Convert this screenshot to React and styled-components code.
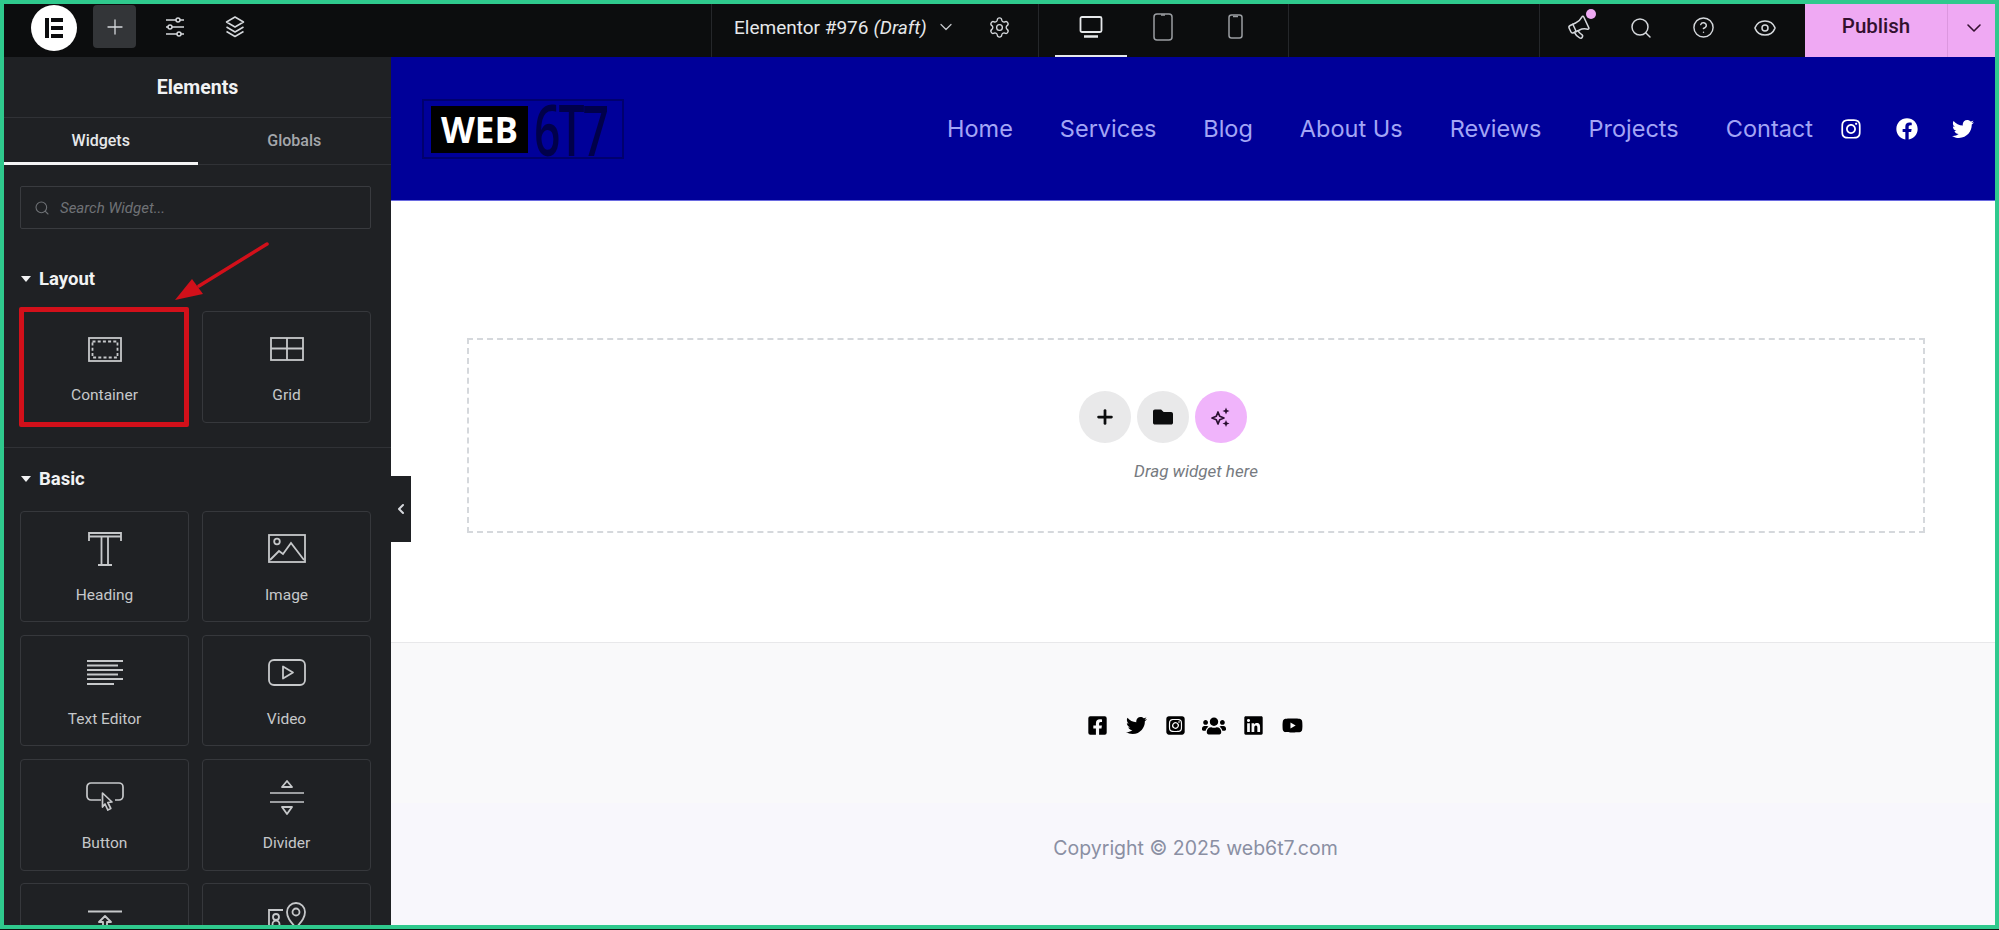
import styled, { createGlobalStyle } from "styled-components";
import { Plus, ChevronDown, ChevronLeft, Settings, Megaphone, Search, CircleHelp, Eye } from "lucide-react";
import { FaFacebook, FaFacebookSquare, FaFolder, FaInstagram, FaLinkedin, FaTwitter, FaUsers, FaYoutube } from "react-icons/fa";
import { FaSquareInstagram } from "react-icons/fa6";

/* ── global ───────────────────────────────────────────── */
const GlobalStyle = createGlobalStyle`
  html, body { margin: 0; padding: 0; background: #0d1512; }
  * { box-sizing: border-box; }
  body { font-family: Roboto, "Liberation Sans", sans-serif; }
`;

const Frame = styled.div`
  width: 1999px;
  height: 929px;
  border: 4px solid #2fc98d;
  display: flex;
  flex-direction: column;
  overflow: hidden;
  background: #fff;
`;

/* ── top bar ──────────────────────────────────────────── */
const TopBar = styled.header`
  height: 53px;
  flex: none;
  display: flex;
  background: #0c0d0e;
  color: #d5d8dc;
`;

const LeftTools = styled.div`
  width: 707px;
  display: flex;
  align-items: flex-start;
  gap: 17px;
  padding: 1px 0 0 27px;
`;

const LogoDisc = styled.div`
  width: 46px;
  height: 46px;
  margin-right: -1px;
  border-radius: 50%;
  background: #fff;
  display: flex;
  align-items: center;
  justify-content: center;
`;

const ToolBtn = styled.div`
  width: 43px;
  height: 43px;
  border-radius: 4px;
  display: flex;
  align-items: center;
  justify-content: center;
  background: ${(p) => (p.$active ? "#333538" : "transparent")};
`;

const TitleArea = styled.div`
  width: 327px;
  display: flex;
  align-items: center;
  padding: 0 0 7px 22px;
  border-left: 1px solid #25272a;
  font-size: 19px;
  color: #e6e8ea;
  white-space: nowrap;

  em { margin-left: 5px; }
`;

const TitleChevron = styled.span`
  display: flex;
  margin-left: 9px;
  color: #c5c7ca;
`;

const TitleGear = styled.span`
  display: flex;
  margin-left: 32px;
  color: #d5d8dc;
`;

const Devices = styled.div`
  width: 251px;
  display: flex;
  padding: 0 16px;
  border-left: 1px solid #25272a;
  border-right: 1px solid #25272a;
`;

const DeviceTab = styled.div`
  width: 73px;
  display: flex;
  align-items: center;
  justify-content: center;
  padding-bottom: 6px;
  color: ${(p) => (p.$active ? "#e6e8ea" : "#9a9da1")};
  border-bottom: 2px solid ${(p) => (p.$active ? "#e6e8ea" : "transparent")};
`;

const RightTools = styled.div`
  width: 456px;
  margin-left: auto;
  display: flex;
  justify-content: space-between;
  padding-left: 8px;
  border-left: 1px solid #25272a;
`;

const IconRow = styled.div`
  display: flex;
`;

const RightBtn = styled.div`
  position: relative;
  width: 62px;
  display: flex;
  align-items: center;
  justify-content: center;
  padding-bottom: 6px;
`;

const NoticeDot = styled.span`
  position: absolute;
  top: 5px;
  left: 38px;
  width: 10px;
  height: 10px;
  border-radius: 50%;
  background: #efa9f3;
`;

const Publish = styled.div`
  width: 190px;
  flex: none;
  display: flex;
  background: #efa9f3;
  color: #33102f;
`;

const PublishLabel = styled.div`
  width: 142px;
  display: flex;
  align-items: center;
  justify-content: center;
  padding-bottom: 9px;
  font-size: 20.5px;
  font-weight: 500;
`;

const PublishMore = styled.div`
  flex: 1;
  display: flex;
  align-items: center;
  justify-content: center;
  padding: 0 0 5px 5px;
  border-left: 1px solid #dc97df;
`;

/* ── side panel ───────────────────────────────────────── */
const Body = styled.div`
  flex: 1;
  min-height: 0;
  display: flex;
`;

const Panel = styled.aside`
  position: relative;
  width: 387px;
  flex: none;
  background: #1f2124;
  color: #d5d8dc;
  overflow: hidden;
`;

const PanelTitle = styled.div`
  height: 61px;
  display: flex;
  align-items: center;
  justify-content: center;
  border-bottom: 1px solid #303236;
  font-size: 19.5px;
  font-weight: 700;
  color: #f1f2f3;
`;

const Tabs = styled.div`
  height: 47px;
  display: flex;
  border-bottom: 1px solid #303236;
`;

const Tab = styled.div`
  width: 194px;
  display: flex;
  align-items: center;
  justify-content: center;
  padding-top: 1px;
  margin-bottom: -1px;
  font-size: 16px;
  font-weight: 500;
  color: ${(p) => (p.$active ? "#e6e8ea" : "#a4a7ab")};
  border-bottom: 3px solid ${(p) => (p.$active ? "#f4f4f5" : "transparent")};
`;

const SearchBox = styled.div`
  height: 43px;
  margin: 21px 20px 0 16px;
  display: flex;
  align-items: center;
  gap: 10px;
  padding-left: 13px;
  border: 1px solid #393b3f;
  border-radius: 2px;
  font-size: 15px;
  font-style: italic;
  color: #6f7276;
`;

const Section = styled.section`
  padding: ${(p) => (p.$first ? "39px" : "20px")} 20px 24px 16px;
  border-bottom: ${(p) => (p.$first ? "1px solid #303236" : "none")};
`;

const SectionTitle = styled.h3`
  height: 22px;
  margin: 0 0 21px;
  display: flex;
  align-items: center;
  gap: 8px;
  font-size: 18.5px;
  font-weight: 700;
  color: #f1f2f3;

  &::before {
    content: "";
    margin-left: 1px;
    border-left: 5px solid transparent;
    border-right: 5px solid transparent;
    border-top: 6px solid #f1f2f3;
  }
`;

const CardGrid = styled.div`
  display: grid;
  grid-template-columns: 169px 169px;
  grid-auto-rows: 111.5px;
  gap: 12.8px 13px;
`;

const Card = styled.div`
  position: relative;
  display: flex;
  flex-direction: column;
  align-items: center;
  padding-top: 17px;
  border: 1px solid #36383c;
  border-radius: 4px;
  font-size: 15.5px;
  color: #c6c8ca;

  ${(p) =>
    p.$marked &&
    `&::after {
      content: "";
      position: absolute;
      inset: -5px -1px -5px -2px;
      border: 5px solid #d2101a;
      border-radius: 2px;
    }`}
`;

const CardIcon = styled.div`
  height: 40px;
  display: flex;
  align-items: ${(p) => (p.$low ? "flex-end" : "center")};
  justify-content: center;
  color: #c6c8ca;
`;

const CardLabel = styled.div`
  height: 20px;
  margin-top: 16px;
  line-height: 20px;
`;

const RedArrow = styled.svg`
  position: absolute;
  left: 167px;
  top: 181px;
`;

/* ── canvas ───────────────────────────────────────────── */
const Canvas = styled.main`
  position: relative;
  flex: 1;
  display: flex;
  flex-direction: column;
`;

const CollapseTab = styled.div`
  position: absolute;
  left: 0;
  top: 419px;
  width: 20px;
  height: 66px;
  display: flex;
  align-items: center;
  justify-content: center;
  background: #1f2124;
  color: #d5d8dc;
`;

const SiteHeader = styled.div`
  height: 144px;
  flex: none;
  display: flex;
  align-items: center;
  padding: 1px 21px 0 31px;
  background: #000099;
  border-bottom: 1px solid #6a6ae0;
`;

const Logo = styled.div`
  width: 202px;
  height: 60px;
  flex: none;
  display: flex;
  align-items: center;
  padding-left: 7px;
  border: 2px solid #00006e;
`;

const LogoWeb = styled.div`
  width: 97px;
  height: 47px;
  flex: none;
  display: flex;
  align-items: center;
  justify-content: center;
  background: #000;
  color: #fff;
  font: 700 35px/1 "Open Sans", sans-serif;
`;

const LogoNum = styled.div`
  margin-left: 6px;
  font: 600 70px/56px "Open Sans", sans-serif;
  color: #00004a;
  letter-spacing: -3px;
  transform: scaleX(0.66);
  transform-origin: left center;
`;

const Nav = styled.nav`
  margin-left: auto;
  display: flex;
  gap: 47px;
  font: 400 23.5px/1 Inter, sans-serif;
  color: #a3a5f5;
  white-space: nowrap;
`;

const Socials = styled.div`
  margin-left: 27px;
  display: flex;
  align-items: center;
  gap: 34px;
  color: #fff;
`;

const Stage = styled.div`
  height: 441px;
  flex: none;
  padding: 137px 70px 0 76px;
  background: #fff;
`;

const DropZone = styled.div`
  height: 195px;
  display: flex;
  flex-direction: column;
  align-items: center;
  padding-top: 51px;
  border: 2px dashed #d5d8dc;
`;

const CircleRow = styled.div`
  display: flex;
  gap: 6px;
  margin-right: 66px;
`;

const Circle = styled.div`
  width: 52px;
  height: 52px;
  border-radius: 50%;
  display: flex;
  align-items: center;
  justify-content: center;
  color: #0c0d0e;
  background: ${(p) => (p.$ai ? "#f0b4fb" : "#e9e9ea")};
`;

const DropHint = styled.div`
  height: 20px;
  margin-top: 18px;
  font-size: 17px;
  font-style: italic;
  line-height: 20px;
  color: #767a80;
`;

const FooterIcons = styled.div`
  height: 161px;
  flex: none;
  display: flex;
  align-items: center;
  justify-content: center;
  gap: 18px;
  padding: 5px 0 0 3px;
  background: #f9f9fa;
  border-top: 1px solid #e8e8ea;
  color: #000;
`;

const UsersIcon = styled(FaUsers)`
  margin: 0 -1.5px;
`;

const Copyright = styled.div`
  flex: 1;
  padding: 33px 0 0 5px;
  background: #f8f7fc;
  text-align: center;
  font: 400 19.5px/24px Inter, sans-serif;
  color: #8a8fa3;
`;

/* ── drawings ─────────────────────────────────────────── */
const ElementorMark = () => (
  <svg width="22" height="22" viewBox="0 0 22 22" fill="#0c0d0e">
    <rect x="2" y="1" width="4" height="20" />
    <rect x="8" y="1" width="12" height="4" />
    <rect x="8" y="9" width="12" height="4" />
    <rect x="8" y="17" width="12" height="4" />
  </svg>
);

const SlidersIcon = () => (
  <svg width="22" height="22" viewBox="0 0 22 22" fill="none" stroke="#d5d8dc" strokeWidth="1.5">
    <path d="M2 4h10M16 4h4M2 11h2M8 11h12M2 18h11M17 18h3" />
    <circle cx="14" cy="4" r="2" />
    <circle cx="6" cy="11" r="2" />
    <circle cx="15" cy="18" r="2" />
  </svg>
);

const LayersIcon = () => (
  <svg width="22" height="24" viewBox="0 0 22 24" fill="none" stroke="#d5d8dc" strokeWidth="1.5" strokeLinejoin="round">
    <path d="M11 2l8.500 5-8.500 5-8.500-5z" />
    <path d="M2.500 12l8.500 5 8.500-5" />
    <path d="M2.500 16.500l8.500 5 8.500-5" />
  </svg>
);

const DesktopIcon = () => (
  <svg width="24" height="22" viewBox="0 0 24 22" fill="none" stroke="currentColor" strokeWidth="1.8">
    <rect x="1.500" y="1" width="21" height="15" rx="1.500" />
    <path d="M5 20.500h14" strokeWidth="2.500" />
  </svg>
);

const TabletIcon = () => (
  <svg width="20" height="28" viewBox="0 0 20 28" fill="none" stroke="currentColor" strokeWidth="1.500">
    <rect x="1" y="1" width="18" height="26" rx="3" />
    <path d="M8 2h4" />
  </svg>
);

const PhoneIcon = () => (
  <svg width="15" height="25" viewBox="0 0 15 25" fill="none" stroke="currentColor" strokeWidth="1.500">
    <rect x="1" y="1" width="13" height="23" rx="2.500" />
    <path d="M5 2.500h5" />
  </svg>
);

const AiIcon = () => (
  <svg width="22" height="22" viewBox="0 0 22 22" fill="#2a1030">
    <path d="M8 6l1.700 4.300L14 12l-4.300 1.700L8 18l-1.700-4.300L2 12l4.300-1.700z" fill="none" stroke="#2a1030" strokeWidth="1.700" strokeLinejoin="round" />
    <path d="M16 1.500l1 2.500 2.500 1-2.500 1-1 2.500-1-2.500-2.500-1 2.500-1z" />
    <path d="M16 14l1 2.500 2.500 1-2.500 1-1 2.500-1-2.500-2.500-1 2.500-1z" />
  </svg>
);

const stroke = { fill: "none", stroke: "currentColor", strokeWidth: 1.5 };

const ContainerGlyph = () => (
  <svg width="34" height="25" viewBox="0 0 34 25" {...stroke} strokeWidth="1.800">
    <rect x="1" y="1" width="32" height="23" />
    <rect x="4.500" y="4.500" width="25" height="16" strokeDasharray="3 2.200" />
  </svg>
);

const GridGlyph = () => (
  <svg width="34" height="24" viewBox="0 0 34 24" {...stroke} strokeWidth="1.800">
    <rect x="1" y="1" width="32" height="22" />
    <path d="M1 11.500h32M17 1v22" />
  </svg>
);

const HeadingGlyph = () => (
  <svg width="36" height="36" viewBox="0 0 36 36" {...stroke} strokeWidth="1.800">
    <path d="M2 10V2h32v8M2 5.500h32M14.500 5.500V33M21 5.500V33M11 34h14" />
  </svg>
);

const ImageGlyph = () => (
  <svg width="38" height="29" viewBox="0 0 38 29" {...stroke} strokeWidth="1.800">
    <rect x="1" y="1" width="36" height="27" />
    <circle cx="9" cy="7.500" r="2.800" />
    <path d="M2 26l9-9 4 3 8-11 13 17" />
  </svg>
);

const TextGlyph = () => (
  <svg width="38" height="26" viewBox="0 0 38 26" {...stroke} strokeWidth="2">
    <path d="M1 1h36M1 5.500h31M1 10h36M1 14.500h31M1 19h36M1 24h27" />
  </svg>
);

const VideoGlyph = () => (
  <svg width="38" height="27" viewBox="0 0 38 27" {...stroke} strokeWidth="1.800">
    <rect x="1" y="1" width="36" height="25" rx="5" />
    <path d="M15 7.500v12l10-6z" strokeLinejoin="round" />
  </svg>
);

const ButtonGlyph = () => (
  <svg width="38" height="30" viewBox="0 0 38 30" {...stroke} strokeWidth="1.700">
    <path d="M15 18H5a4 4 0 0 1-4-4V5a4 4 0 0 1 4-4h28a4 4 0 0 1 4 4v9a4 4 0 0 1-4 4h-4" />
    <path d="M16.500 11l9.500 9-4.200.5 3 6-3 1.500-2.800-6-2.500 3z" strokeLinejoin="round" />
  </svg>
);

const DividerGlyph = () => (
  <svg width="36" height="36" viewBox="0 0 36 36" {...stroke} strokeWidth="1.700">
    <path d="M1 14h34M1 23h34" />
    <path d="M18 2l5 6H13zM18 35l-5-7h10z" strokeLinejoin="round" strokeWidth="1.800" />
  </svg>
);

const SpacerGlyph = () => (
  <svg width="36" height="31" viewBox="0 0 36 31" {...stroke} strokeWidth="1.800">
    <path d="M1 1.500h34M18 6l-6 6h4v18h4V12h4z" strokeLinejoin="round" />
  </svg>
);

const MapGlyph = () => (
  <svg width="38" height="38" viewBox="0 0 38 38" {...stroke} strokeWidth="1.800">
    <path d="M15 8H1v28h14" />
    <circle cx="8" cy="15" r="3" />
    <circle cx="8" cy="22" r="3.500" />
    <circle cx="28" cy="10" r="3.500" />
    <path d="M28 26c-5-6-9-10-9-16a9 9 0 0 1 18 0c0 6-4 10-9 16z" />
    <path d="M18 36l5-9M38 36l-5-9" />
  </svg>
);

const layoutCards = [
  { label: "Container", Glyph: ContainerGlyph, marked: true },
  { label: "Grid", Glyph: GridGlyph },
];

// the last row runs past the bottom of the panel, only its icons show
const basicCards = [
  { label: "Heading", Glyph: HeadingGlyph },
  { label: "Image", Glyph: ImageGlyph },
  { label: "Text Editor", Glyph: TextGlyph },
  { label: "Video", Glyph: VideoGlyph },
  { label: "Button", Glyph: ButtonGlyph },
  { label: "Divider", Glyph: DividerGlyph },
  { id: "spacer", Glyph: SpacerGlyph, low: true },
  { id: "maps", Glyph: MapGlyph },
];

const navItems = ["Home", "Services", "Blog", "About Us", "Reviews", "Projects", "Contact"];

const renderCards = (cards) =>
  cards.map(({ id, label, Glyph, marked, low }) => (
    <Card key={id || label} $marked={marked}>
      <CardIcon $low={low}>
        <Glyph />
      </CardIcon>
      {label && <CardLabel>{label}</CardLabel>}
    </Card>
  ));

export default function App() {
  return (
    <>
      <GlobalStyle />
      <Frame>
        <TopBar>
          <LeftTools>
            <LogoDisc>
              <ElementorMark />
            </LogoDisc>
            <ToolBtn $active>
              <Plus size={24} strokeWidth={1.3} />
            </ToolBtn>
            <ToolBtn>
              <SlidersIcon />
            </ToolBtn>
            <ToolBtn>
              <LayersIcon />
            </ToolBtn>
          </LeftTools>
          <TitleArea>
            Elementor #976 <em>(Draft)</em>
            <TitleChevron>
              <ChevronDown size={20} strokeWidth={1.5} />
            </TitleChevron>
            <TitleGear>
              <Settings size={23} strokeWidth={1.4} />
            </TitleGear>
          </TitleArea>
          <Devices>
            <DeviceTab $active>
              <DesktopIcon />
            </DeviceTab>
            <DeviceTab>
              <TabletIcon />
            </DeviceTab>
            <DeviceTab>
              <PhoneIcon />
            </DeviceTab>
          </Devices>
          <RightTools>
            <IconRow>
              <RightBtn>
                <Megaphone size={24} strokeWidth={1.5} style={{ transform: "rotate(-25deg)" }} />
                <NoticeDot />
              </RightBtn>
              <RightBtn>
                <Search size={24} strokeWidth={1.5} />
              </RightBtn>
              <RightBtn>
                <CircleHelp size={23} strokeWidth={1.5} />
              </RightBtn>
              <RightBtn>
                <Eye size={24} strokeWidth={1.5} />
              </RightBtn>
            </IconRow>
            <Publish>
              <PublishLabel>Publish</PublishLabel>
              <PublishMore>
                <ChevronDown size={24} strokeWidth={1.6} />
              </PublishMore>
            </Publish>
          </RightTools>
        </TopBar>

        <Body>
          <Panel>
            <PanelTitle>Elements</PanelTitle>
            <Tabs>
              <Tab $active>Widgets</Tab>
              <Tab>Globals</Tab>
            </Tabs>
            <SearchBox>
              <Search size={16} strokeWidth={1.6} />
              Search Widget...
            </SearchBox>
            <Section $first>
              <SectionTitle>Layout</SectionTitle>
              <CardGrid>{renderCards(layoutCards)}</CardGrid>
            </Section>
            <Section>
              <SectionTitle>Basic</SectionTitle>
              <CardGrid>{renderCards(basicCards)}</CardGrid>
            </Section>
            <RedArrow width="100" height="70" viewBox="0 0 100 70">
              <path d="M96 6L28 48" stroke="#d2101a" strokeWidth="3.500" strokeLinecap="round" />
              <path d="M4 62l17-21 11 15z" fill="#d2101a" />
            </RedArrow>
          </Panel>

          <Canvas>
            <CollapseTab>
              <ChevronLeft size={16} strokeWidth={3} />
            </CollapseTab>
            <SiteHeader>
              <Logo>
                <LogoWeb>WEB</LogoWeb>
                <LogoNum>6T7</LogoNum>
              </Logo>
              <Nav>
                {navItems.map((item) => (
                  <span key={item}>{item}</span>
                ))}
              </Nav>
              <Socials>
                <FaInstagram size={22} />
                <FaFacebook size={22} />
                <FaTwitter size={22} />
              </Socials>
            </SiteHeader>
            <Stage>
              <DropZone>
                <CircleRow>
                  <Circle>
                    <Plus size={22} strokeWidth={3} />
                  </Circle>
                  <Circle>
                    <FaFolder size={20} />
                  </Circle>
                  <Circle $ai>
                    <AiIcon />
                  </Circle>
                </CircleRow>
                <DropHint>Drag widget here</DropHint>
              </DropZone>
            </Stage>
            <FooterIcons>
              <FaFacebookSquare size={21} />
              <FaTwitter size={21} />
              <FaSquareInstagram size={21} />
              <UsersIcon size={24} />
              <FaLinkedin size={21} />
              <FaYoutube size={21} />
            </FooterIcons>
            <Copyright>Copyright © 2025 web6t7.com</Copyright>
          </Canvas>
        </Body>
      </Frame>
    </>
  );
}
